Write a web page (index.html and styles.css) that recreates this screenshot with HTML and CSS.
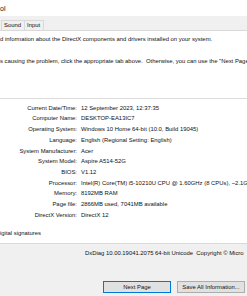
FILE: index.html
```
<!DOCTYPE html>
<html>
<head>
    <meta charset="UTF-8" />
    <meta name="viewport" content="width=device-width, initial-scale=1.0">
    <title>DirectX Diagnostic Tool</title>
    <link rel="stylesheet" href="styles.css">
</head>

<body>
    <div class="window">
        <div class="title-bar">ol</div>

        <div class="tab-strip">
            <div class="tab first">Sound</div>
            <div class="tab">Input</div>
        </div>

        <div class="tab-page">
            <div class="intro">d information about the DirectX components and drivers installed on your system.</div>
            <div class="intro second">s causing the problem, click the appropriate tab above.&nbsp; Otherwise, you can use the "Next Page</div>

            <div class="group-box">
                <div class="info-grid">
                    <div class="label">Current Date/Time:</div><div class="value">12 September 2023, 12:37:35</div>
                    <div class="label">Computer Name:</div><div class="value">DESKTOP-EA13IC7</div>
                    <div class="label">Operating System:</div><div class="value">Windows 10 Home 64-bit (10.0, Build 19045)</div>
                    <div class="label">Language:</div><div class="value">English (Regional Setting: English)</div>
                    <div class="label">System Manufacturer:</div><div class="value">Acer</div>
                    <div class="label">System Model:</div><div class="value">Aspire A514-52G</div>
                    <div class="label">BIOS:</div><div class="value">V1.12</div>
                    <div class="label">Processor:</div><div class="value">Intel(R) Core(TM) i5-10210U CPU @ 1.60GHz (8 CPUs), ~2.1G</div>
                    <div class="label">Memory:</div><div class="value">8192MB RAM</div>
                    <div class="label">Page file:</div><div class="value">2866MB used, 7041MB available</div>
                    <div class="label">DirectX Version:</div><div class="value">DirectX 12</div>
                </div>
            </div>

            <div class="check-row">igital signatures</div>
        </div>

        <div class="footer">
            <div class="version">DxDiag 10.00.19041.2075 64-bit Unicode&nbsp; Copyright © Micro</div>
            <div class="button-row">
                <button class="dlg-button default">Next Page</button>
                <button class="dlg-button">Save All Information...</button>
            </div>
        </div>
    </div>
</body>
</html>
```

FILE: styles.css
```
* {
    margin: 0;
    padding: 0;
    box-sizing: border-box;
}

body {
    font-family: "Liberation Sans", Arial, sans-serif;
    font-size: 5.9px;
    color: #111;
    background: #f0f0f0;
    width: 247px;
    height: 296px;
    overflow: hidden;
}

.window {
    width: 247px;
    height: 296px;
    display: flex;
    flex-direction: column;
    overflow: hidden;
}

.title-bar {
    height: 16px;
    line-height: 17px;
    font-size: 7px;
    background: #fff;
    color: #111;
}

.tab-strip {
    height: 15px;
    display: flex;
    align-items: flex-end;
    background: #f0f0f0;
    border-bottom: 1px solid #d9d9d9;
    padding-left: 1px;
}

.tab {
    height: 10px;
    line-height: 9px;
    padding: 0 3px 0 2px;
    border: 1px solid #d9d9d9;
    border-bottom: none;
    border-left: none;
    background: #f0f0f0;
    white-space: nowrap;
}

.tab.first {
    border-left: 1px solid #d9d9d9;
    padding-left: 2px;
}

.tab-page {
    height: 213px;
    background: #fff;
    border-bottom: 1px solid #d9d9d9;
    padding-top: 4px;
    overflow: hidden;
}

.intro {
    line-height: 8px;
    white-space: nowrap;
}

.intro.second {
    margin-top: 14px;
}

.group-box {
    margin-top: 33px;
    border-top: 1px solid #dcdcdc;
    padding-top: 3.7px;
}

.info-grid {
    display: grid;
    grid-template-columns: 77px 1fr;
    column-gap: 4px;
    line-height: 10.7px;
    white-space: nowrap;
}

.label {
    text-align: right;
}

.check-row {
    margin-top: 8.5px;
    line-height: 8px;
}

.footer {
    flex: 1;
    background: #f0f0f0;
    padding-top: 5px;
}

.version {
    padding-left: 85px;
    line-height: 8px;
    white-space: nowrap;
}

.button-row {
    display: flex;
    justify-content: flex-end;
    gap: 6px;
    margin-top: 24px;
    padding-right: 2px;
}

.dlg-button {
    width: 68px;
    height: 12px;
    font-family: "Liberation Sans", Arial, sans-serif;
    font-size: 5.9px;
    color: #111;
    background: #e1e1e1;
    border: 1px solid #adadad;
}

.dlg-button.default {
    border: 1px solid #0078d7;
}
```
